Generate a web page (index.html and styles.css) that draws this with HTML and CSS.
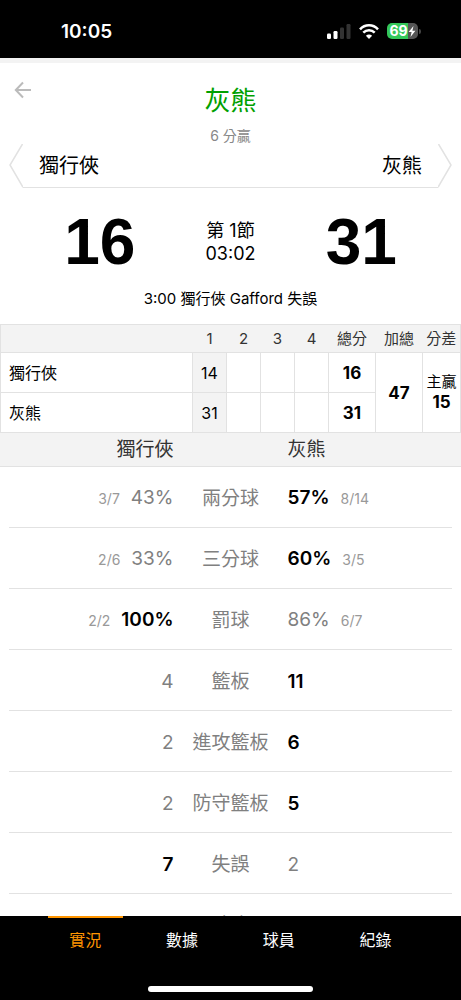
FILE: index.html
```html
<!DOCTYPE html>
<html lang="zh-Hant">
<head>
  <meta charset="UTF-8" />
  <meta name="viewport" content="width=device-width, initial-scale=1" />
  <title>獨行俠 - 灰熊</title>
  <link rel="stylesheet" href="styles.css">
</head>
<body>
  <div class="statusbar">
    <span class="clock">10:05</span>
    <div class="status-icons">
      <svg class="signal" width="24" height="15" viewBox="0 0 24 15">
        <rect x="0" y="9.500" width="4" height="5.500" rx="1.2" fill="#fff" />
        <rect x="6.5" y="7" width="4" height="8" rx="1.2" fill="#fff" />
        <rect x="13" y="3.500" width="4" height="11.500" rx="1.2" fill="#333" />
        <rect x="19.500" y="0" width="4" height="15" rx="1.2" fill="#333" />
      </svg>
      <svg class="wifi" width="20" height="15" viewBox="0 0 20 15">
        <g fill="none" stroke="#fff" stroke-width="2.500">
          <path d="M1 5.300C6-.1 14-.1 19 5.300" />
          <path d="M4.300 8.700C7.500 5.400 12.500 5.400 15.700 8.700" />
        </g>
        <path d="M10 15L6.900 11.800C8.700 10.200 11.300 10.200 13.100 11.800Z" fill="#fff" />
      </svg>
      <div class="battery">
        <span class="battery-body">69<svg width="8" height="11" viewBox="0 0 8 11"><path d="M5.500 0L.6 6.100H3.600L2.500 11L7.400 4.700H4.400Z" fill="#fff" /></svg></span>
        <span class="battery-tip"></span>
      </div>
    </div>
  </div>

  <main class="page">
    <header class="top">
      <a class="back" href="#" aria-label="返回">
        <svg width="18" height="18" viewBox="0 0 18 18" fill="none" stroke="#bbb" stroke-width="2">
          <path d="M17 9H2M9 1.500L1.800 9L9 16.500" />
        </svg>
      </a>
      <div class="winner">
        <h1>灰熊</h1>
        <p>6 分贏</p>
      </div>
    </header>

    <div class="versus">
      <svg width="14" height="44" viewBox="0 0 14 44" fill="none" stroke="#e2e2e2" stroke-width="1.500">
        <path d="M13.500 0L1 21L14 43.300" />
      </svg>
      <div class="teams"><span>獨行俠</span><span>灰熊</span></div>
      <svg width="14" height="44" viewBox="0 0 14 44" fill="none" stroke="#e2e2e2" stroke-width="1.500">
        <path d="M.5 0L13 21L0 43.300" />
      </svg>
    </div>

    <section class="score">
      <strong>16</strong>
      <div class="period">第 1節<br>03:02</div>
      <strong>31</strong>
    </section>
    <p class="play">3:00 獨行俠 Gafford 失誤</p>

    <table class="quarters">
      <colgroup>
        <col>
        <col class="q"><col class="q"><col class="q"><col class="q">
        <col class="total"><col class="total"><col class="diff">
      </colgroup>
      <thead>
        <tr>
          <th></th><th>1</th><th>2</th><th>3</th><th>4</th>
          <th>總分</th><th>加總</th><th>分差</th>
        </tr>
      </thead>
      <tbody>
        <tr>
          <td class="name">獨行俠</td>
          <td class="current">14</td><td></td><td></td><td></td>
          <td><b>16</b></td>
          <td rowspan="2"><b>47</b></td>
          <td rowspan="2" class="margin">主贏<br><b>15</b></td>
        </tr>
        <tr>
          <td class="name">灰熊</td>
          <td class="current">31</td><td></td><td></td><td></td>
          <td><b>31</b></td>
        </tr>
      </tbody>
    </table>

    <table class="stats">
      <thead>
        <tr><th>獨行俠</th><th></th><th>灰熊</th></tr>
      </thead>
      <tbody>
        <tr><td><small>3/7</small>43%</td><th>兩分球</th><td><b>57%</b><small>8/14</small></td></tr>
        <tr><td><small>2/6</small>33%</td><th>三分球</th><td><b>60%</b><small>3/5</small></td></tr>
        <tr><td><small>2/2</small><b>100%</b></td><th>罰球</th><td>86%<small>6/7</small></td></tr>
        <tr><td>4</td><th>籃板</th><td><b>11</b></td></tr>
        <tr><td>2</td><th>進攻籃板</th><td><b>6</b></td></tr>
        <tr><td>2</td><th>防守籃板</th><td><b>5</b></td></tr>
        <tr><td><b>7</b></td><th>失誤</th><td>2</td></tr>
        <tr><td></td><th>助攻</th><td></td></tr>
      </tbody>
    </table>
  </main>

  <footer class="bottom">
    <nav class="tabs">
      <a class="active" href="#">實況</a>
      <a href="#">數據</a>
      <a href="#">球員</a>
      <a href="#">紀錄</a>
    </nav>
    <div class="home-bar"></div>
  </footer>
</body>
</html>
```

FILE: styles.css
```css
* {
  box-sizing: border-box;
}
body {
  margin: 0;
  height: 100vh;
  display: flex;
  flex-direction: column;
  overflow: hidden;
  background: #fff;
  color: #000;
  font-family: Inter, "Noto Sans CJK TC", sans-serif;
  font-size: 16px;
}
h1, p {
  margin: 0;
  font-weight: 400;
}
a {
  color: inherit;
  text-decoration: none;
}
svg {
  display: block;
  flex: none;
}

/* status bar */
.statusbar {
  flex: none;
  height: 58px;
  padding: 4px 40px 0 61px;
  display: flex;
  align-items: center;
  justify-content: space-between;
  background: #000;
  color: #fff;
}
.clock {
  font-size: 19px;
  font-weight: 600;
}
.status-icons {
  display: flex;
  align-items: center;
  gap: 8px;
}
.battery {
  display: flex;
  align-items: center;
  gap: 1px;
}
.battery-body {
  display: flex;
  align-items: center;
  justify-content: center;
  width: 31px;
  height: 16px;
  border-radius: 5px;
  background: linear-gradient(to right, #34c759 69%, #555 69%);
  font-size: 14px;
  font-weight: 700;
  line-height: 16px;
}
.battery-tip {
  width: 2px;
  height: 5px;
  border-radius: 0 2px 2px 0;
  background: #444;
}

/* match header */
.page {
  flex: 1;
  min-height: 0;
  overflow: hidden;
  border-top: 5px solid #f3f3f3;
}
.top {
  display: grid;
  grid-template-columns: 32px 1fr 32px;
  height: 81px;
  padding: 18px 14px 0;
}
.winner {
  text-align: center;
}
.winner h1 {
  font-size: 26px;
  line-height: 40px;
  color: #00a000;
}
.winner p {
  margin-top: 5px;
  font-size: 14px;
  line-height: 20px;
  color: #888;
}
.versus {
  display: flex;
  padding: 0 9px;
}
.teams {
  flex: 1;
  display: flex;
  justify-content: space-between;
  padding: 1px 16px 0;
  border-bottom: 1px solid #e2e2e2;
  font-size: 20px;
  line-height: 42px;
}
.score {
  display: grid;
  grid-template-columns: 1fr 62px 1fr;
  align-items: center;
  padding: 14px 0;
  text-align: center;
}
.score strong {
  font-family: "Liberation Sans", Arial, sans-serif;
  font-size: 64px;
  line-height: 80px;
}
.period {
  font-size: 18px;
  line-height: 23px;
}
.play {
  height: 28px;
  font-size: 15px;
  line-height: 6px;
  text-align: center;
}

/* points per quarter */
.quarters {
  width: 100%;
  table-layout: fixed;
  border-collapse: collapse;
  text-align: center;
  line-height: 20px;
}
.q {
  width: 34px;
}
.total {
  width: 47px;
}
.diff {
  width: 38px;
}
.quarters thead {
  background: #f3f3f3;
  border: 1px solid #e2e2e2;
}
.quarters th {
  height: 28px;
  padding: 0;
  font-size: 15px;
  font-weight: 400;
  color: #333;
}
.quarters td {
  height: 40px;
  padding: 0;
  border: 1px solid #e2e2e2;
}
.quarters .name {
  padding-left: 8px;
  text-align: left;
}
.quarters .current {
  background: #f3f3f3;
}
.quarters .margin {
  font-size: 15px;
}
.quarters b {
  font-size: 17px;
}

/* team comparison */
.stats,
.stats thead,
.stats tbody {
  display: block;
}
.stats {
  font-size: 19px;
  color: #808080;
}
.stats tr {
  display: grid;
  grid-template-columns: 1fr 114px 1fr;
  align-items: center;
}
.stats th,
.stats td {
  padding: 0;
  font-weight: 400;
  line-height: 33px;
  text-align: center;
}
.stats thead {
  background: #f3f3f3;
  border-bottom: 1px solid #e2e2e2;
  color: #333;
}
.stats tbody {
  margin: 0 9px;
}
.stats tbody tr {
  height: 61px;
  padding-top: 2px;
  border-bottom: 1px solid #e2e2e2;
}
.stats tr :first-child {
  text-align: right;
}
.stats tr :last-child {
  text-align: left;
}
.stats b {
  font-weight: 600;
  color: #000;
}
.stats small {
  font-size: 14px;
  color: #999;
}
.stats small:first-child {
  margin-right: 11px;
}
.stats small:last-child {
  margin-left: 11px;
}

/* bottom tabs */
.bottom {
  flex: none;
  height: 84px;
  padding-bottom: 8px;
  display: flex;
  flex-direction: column;
  align-items: center;
  justify-content: space-between;
  background: #000;
  color: #fff;
}
.tabs {
  display: flex;
  width: 100%;
  padding: 0 37px;
}
.tabs a {
  flex: 1;
  margin: 0 11px;
  border-top: 2px solid transparent;
  line-height: 44px;
  text-align: center;
}
.tabs .active {
  border-color: #ff9500;
  color: #ff9500;
}
.home-bar {
  width: 36%;
  height: 6px;
  border-radius: 3px;
  background: #fff;
}
```
